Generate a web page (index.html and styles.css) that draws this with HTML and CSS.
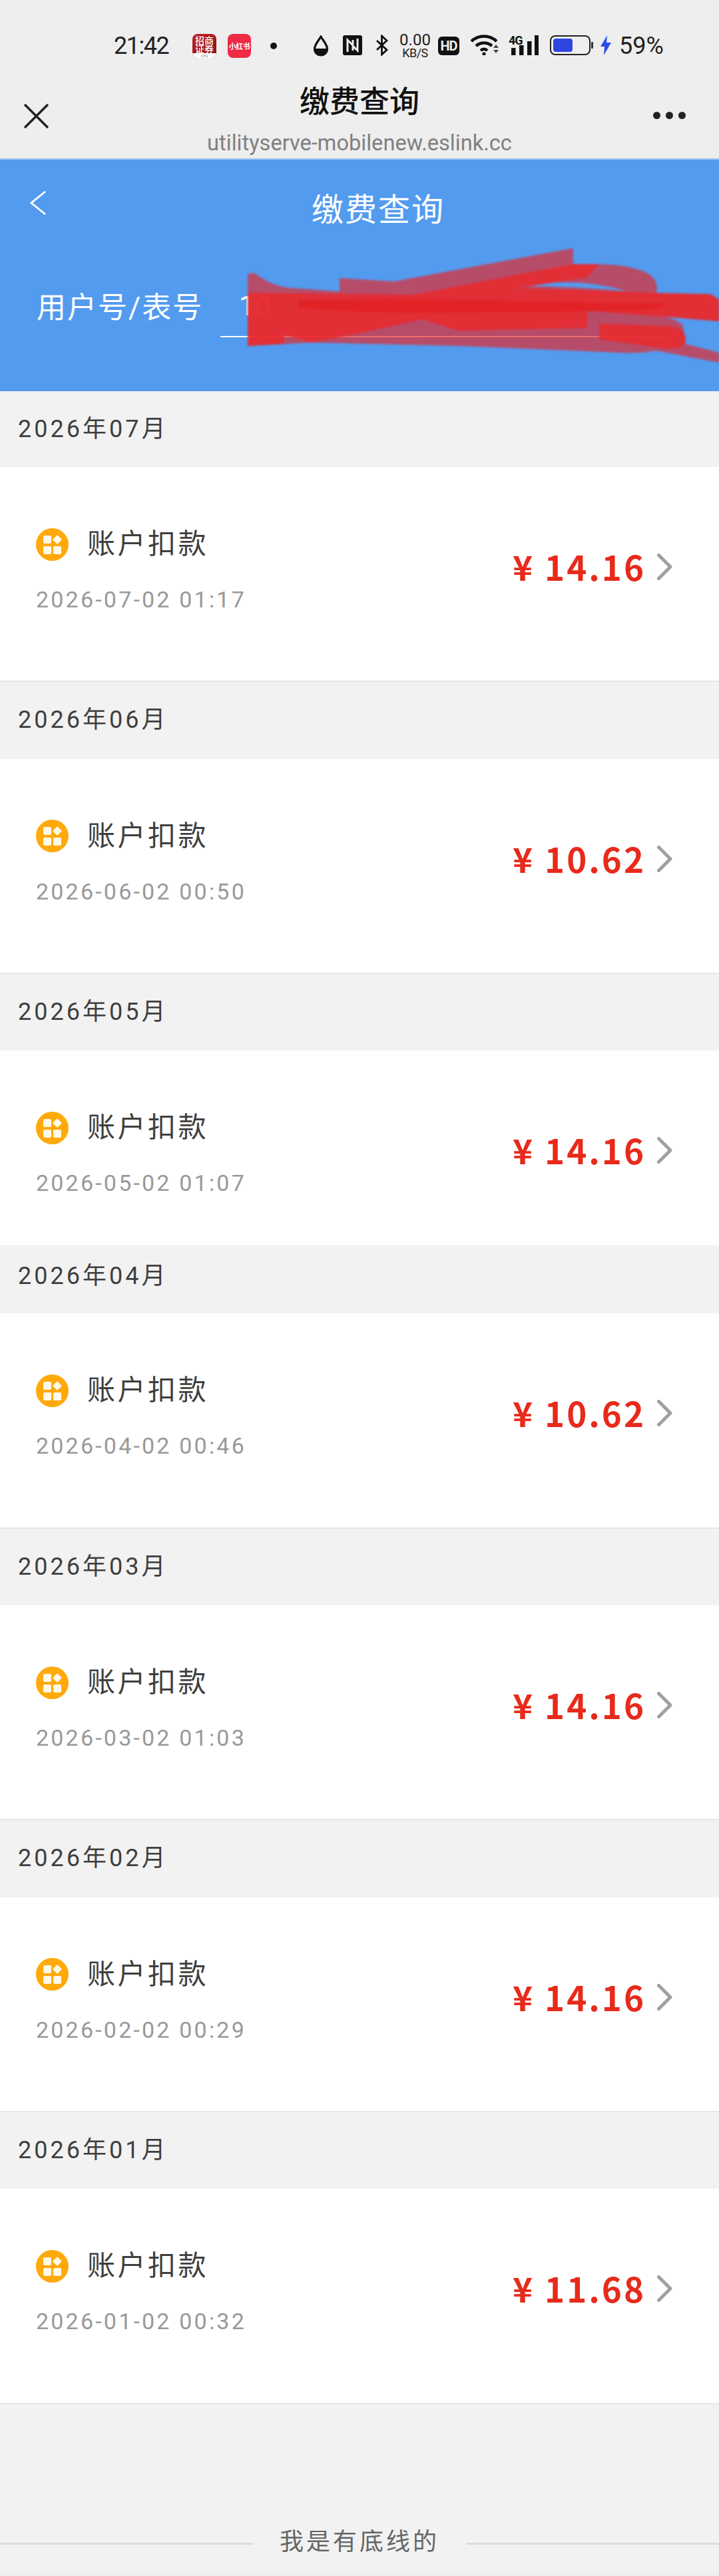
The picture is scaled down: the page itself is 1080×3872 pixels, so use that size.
FILE: index.html
```html
<!DOCTYPE html>
<html lang="zh-CN">
<head>
	<meta charset="UTF-8">
	<meta name="viewport" content="width=device-width,minimum-scale=1.0,maximum-scale=1.0,user-scalable=no">
	<title>缴费查询</title>
	<link rel="stylesheet" href="styles.css">
</head>
<body>
	<header class="top">
		<div class="status">
			<span class="time">21:42</span>
			<span class="app cms"><b>招商<br>证券</b><small>CMS</small></span>
			<span class="app xhs">小红书</span>
			<i class="dot"></i>
			<svg class="drop" viewBox="0 0 24 32"><path d="M12 2C8 9 2.500 14 2.500 20.500a9.500 9.500 0 0 0 19 0C21.500 14 16 9 12 2z" fill="none" stroke="#111" stroke-width="3.200"/><path d="M3 20h18v1a9 9 0 0 1-18 0z" fill="#111"/></svg>
			<svg class="nfc" viewBox="0 0 29 30"><rect width="29" height="30" rx="3" fill="#111"/><path d="M7 25V7l8 8v8M22 5v18l-7-7V7" fill="none" stroke="#eee" stroke-width="3"/></svg>
			<svg class="bt" viewBox="0 0 21 32"><path d="M3 9l15 14-7.500 7V2L18 9 3 23" fill="none" stroke="#111" stroke-width="2.800"/></svg>
			<span class="speed"><b>0.00</b><em>KB/S</em></span>
			<span class="hd">HD</span>
			<svg class="wifi" viewBox="0 0 45 32"><path d="M2 11c11-10 27-10 38 0M9 18c7-6 17-6 24 0M16 25c3-3 7-3 10 0" fill="none" stroke="#111" stroke-width="4.500"/><circle cx="21" cy="30" r="2.600" fill="#111"/><path d="M35 21l4-5 4 5zM35 24h8l-4 5z" fill="#444"/></svg>
			<svg class="signal" viewBox="0 0 45 32"><rect x="4" y="21" width="6.500" height="11" fill="#111"/><rect x="16" y="17" width="6.500" height="15" fill="#111"/><rect x="28" y="11" width="6.500" height="21" fill="#111"/><rect x="39" y="2" width="6" height="30" fill="#111"/><text x="0" y="16" class="sig-text">4G</text></svg>
			<svg class="batt" viewBox="0 0 66 30"><rect x="1" y="1" width="59" height="28" rx="7" fill="none" stroke="#222" stroke-width="2"/><rect x="5" y="5" width="29" height="20" rx="4" fill="#2f45e0"/><rect x="62" y="10" width="3" height="10" rx="1" fill="#333"/></svg>
			<svg class="bolt" viewBox="0 0 18 30"><path d="M11 0L1 17h6l-1 13L17 11h-7z" fill="#2f4be8"/></svg>
			<span class="pct">59%</span>
		</div>
		<div class="titlebar">
			<svg class="close" viewBox="0 0 37 37"><path d="M1 1l35 35M36 1L1 36" fill="none" stroke="#222" stroke-width="3.500"/></svg>
			<div class="titles">
				<h1>缴费查询</h1>
				<p>utilityserve-mobilenew.eslink.cc</p>
			</div>
			<div class="more"><i></i><i></i><i></i></div>
		</div>
	</header>

	<section class="query">
		<div class="query-head">
			<svg class="back" viewBox="0 0 24 36"><path d="M23 1L2 18l21 17" fill="none" stroke="#fff" stroke-width="2.800"/></svg>
			<h2>缴费查询</h2>
		</div>
		<div class="query-form">
			<label>用户号/表号</label>
			<div class="input">10</div>
		</div>
		<svg class="scribble" viewBox="0 238 1080 350">
			<path class="soft" fill-rule="evenodd" d="M382 410Q410 432 441 433L510 438V418L592 423L861 373V397H899Q950 398 975 412Q992 425 985 442H1067L1080 450V483L985 473Q1020 480 1026 490L1030 517L1080 530V545L985 527Q960 532 930 530L689 520L468 515L372 520V412ZM785 430Q870 416 943 438Q860 430 785 430Z"/>
			<path class="dense" d="M372 440L620 443L861 397H899L882 417L778 433L985 440L1067 442L1080 450V483L882 467V493L689 497L634 480L530 503L468 515L427 503V517L372 520Z"/>
			<path class="core" d="M448 452Q620 448 760 452T1000 456Q1000 468 900 468T640 470Q520 470 448 462Z"/>
			<path class="dense" d="M900 486L1005 490Q1032 494 1030 512Q1026 526 1000 524L900 510Z"/>
		</svg>
	</section>

	<main>
		<h3 class="month first">2026年07月</h3>
		<a class="bill">
			<div class="bill-main">
				<div class="bill-name"><svg class="grid" viewBox="0 0 49 49"><circle cx="24.500" cy="24.500" r="24.500" fill="#ffa90a"/><g fill="#fff9ea"><rect x="11" y="11" width="12" height="12" rx="2"/><rect x="27" y="12" width="10" height="10" rx="1.500" transform="rotate(45 32 17)"/><rect x="11" y="27" width="12" height="12" rx="2"/><rect x="26" y="27" width="12" height="12" rx="2"/></g></svg><span>账户扣款</span></div>
				<div class="bill-date">2026-07-02 01:17</div>
			</div>
			<div class="bill-amount"><span>¥</span>14.16<svg class="arrow" viewBox="0 0 23 40"><path d="M2.500 2.500L20 20 2.500 37.500" fill="none" stroke="#a0a0a0" stroke-width="5" stroke-linecap="round" stroke-linejoin="round"/></svg></div>
		</a>
		<h3 class="month">2026年06月</h3>
		<a class="bill">
			<div class="bill-main">
				<div class="bill-name"><svg class="grid" viewBox="0 0 49 49"><circle cx="24.500" cy="24.500" r="24.500" fill="#ffa90a"/><g fill="#fff9ea"><rect x="11" y="11" width="12" height="12" rx="2"/><rect x="27" y="12" width="10" height="10" rx="1.500" transform="rotate(45 32 17)"/><rect x="11" y="27" width="12" height="12" rx="2"/><rect x="26" y="27" width="12" height="12" rx="2"/></g></svg><span>账户扣款</span></div>
				<div class="bill-date">2026-06-02 00:50</div>
			</div>
			<div class="bill-amount"><span>¥</span>10.62<svg class="arrow" viewBox="0 0 23 40"><path d="M2.500 2.500L20 20 2.500 37.500" fill="none" stroke="#a0a0a0" stroke-width="5" stroke-linecap="round" stroke-linejoin="round"/></svg></div>
		</a>
		<h3 class="month">2026年05月</h3>
		<a class="bill short">
			<div class="bill-main">
				<div class="bill-name"><svg class="grid" viewBox="0 0 49 49"><circle cx="24.500" cy="24.500" r="24.500" fill="#ffa90a"/><g fill="#fff9ea"><rect x="11" y="11" width="12" height="12" rx="2"/><rect x="27" y="12" width="10" height="10" rx="1.500" transform="rotate(45 32 17)"/><rect x="11" y="27" width="12" height="12" rx="2"/><rect x="26" y="27" width="12" height="12" rx="2"/></g></svg><span>账户扣款</span></div>
				<div class="bill-date">2026-05-02 01:07</div>
			</div>
			<div class="bill-amount"><span>¥</span>14.16<svg class="arrow" viewBox="0 0 23 40"><path d="M2.500 2.500L20 20 2.500 37.500" fill="none" stroke="#a0a0a0" stroke-width="5" stroke-linecap="round" stroke-linejoin="round"/></svg></div>
		</a>
		<h3 class="month tight">2026年04月</h3>
		<a class="bill">
			<div class="bill-main">
				<div class="bill-name"><svg class="grid" viewBox="0 0 49 49"><circle cx="24.500" cy="24.500" r="24.500" fill="#ffa90a"/><g fill="#fff9ea"><rect x="11" y="11" width="12" height="12" rx="2"/><rect x="27" y="12" width="10" height="10" rx="1.500" transform="rotate(45 32 17)"/><rect x="11" y="27" width="12" height="12" rx="2"/><rect x="26" y="27" width="12" height="12" rx="2"/></g></svg><span>账户扣款</span></div>
				<div class="bill-date">2026-04-02 00:46</div>
			</div>
			<div class="bill-amount"><span>¥</span>10.62<svg class="arrow" viewBox="0 0 23 40"><path d="M2.500 2.500L20 20 2.500 37.500" fill="none" stroke="#a0a0a0" stroke-width="5" stroke-linecap="round" stroke-linejoin="round"/></svg></div>
		</a>
		<h3 class="month">2026年03月</h3>
		<a class="bill">
			<div class="bill-main">
				<div class="bill-name"><svg class="grid" viewBox="0 0 49 49"><circle cx="24.500" cy="24.500" r="24.500" fill="#ffa90a"/><g fill="#fff9ea"><rect x="11" y="11" width="12" height="12" rx="2"/><rect x="27" y="12" width="10" height="10" rx="1.500" transform="rotate(45 32 17)"/><rect x="11" y="27" width="12" height="12" rx="2"/><rect x="26" y="27" width="12" height="12" rx="2"/></g></svg><span>账户扣款</span></div>
				<div class="bill-date">2026-03-02 01:03</div>
			</div>
			<div class="bill-amount"><span>¥</span>14.16<svg class="arrow" viewBox="0 0 23 40"><path d="M2.500 2.500L20 20 2.500 37.500" fill="none" stroke="#a0a0a0" stroke-width="5" stroke-linecap="round" stroke-linejoin="round"/></svg></div>
		</a>
		<h3 class="month">2026年02月</h3>
		<a class="bill">
			<div class="bill-main">
				<div class="bill-name"><svg class="grid" viewBox="0 0 49 49"><circle cx="24.500" cy="24.500" r="24.500" fill="#ffa90a"/><g fill="#fff9ea"><rect x="11" y="11" width="12" height="12" rx="2"/><rect x="27" y="12" width="10" height="10" rx="1.500" transform="rotate(45 32 17)"/><rect x="11" y="27" width="12" height="12" rx="2"/><rect x="26" y="27" width="12" height="12" rx="2"/></g></svg><span>账户扣款</span></div>
				<div class="bill-date">2026-02-02 00:29</div>
			</div>
			<div class="bill-amount"><span>¥</span>14.16<svg class="arrow" viewBox="0 0 23 40"><path d="M2.500 2.500L20 20 2.500 37.500" fill="none" stroke="#a0a0a0" stroke-width="5" stroke-linecap="round" stroke-linejoin="round"/></svg></div>
		</a>
		<h3 class="month">2026年01月</h3>
		<a class="bill">
			<div class="bill-main">
				<div class="bill-name"><svg class="grid" viewBox="0 0 49 49"><circle cx="24.500" cy="24.500" r="24.500" fill="#ffa90a"/><g fill="#fff9ea"><rect x="11" y="11" width="12" height="12" rx="2"/><rect x="27" y="12" width="10" height="10" rx="1.500" transform="rotate(45 32 17)"/><rect x="11" y="27" width="12" height="12" rx="2"/><rect x="26" y="27" width="12" height="12" rx="2"/></g></svg><span>账户扣款</span></div>
				<div class="bill-date">2026-01-02 00:32</div>
			</div>
			<div class="bill-amount"><span>¥</span>11.68<svg class="arrow" viewBox="0 0 23 40"><path d="M2.500 2.500L20 20 2.500 37.500" fill="none" stroke="#a0a0a0" stroke-width="5" stroke-linecap="round" stroke-linejoin="round"/></svg></div>
		</a>
	</main>

	<footer class="end"><span>我是有底线的</span></footer>
</body>
</html>
```

FILE: styles.css
```css
*{margin: 0; padding: 0; box-sizing: border-box;}
html,body{width: 1080px; height: 3872px; overflow: hidden;}
body{background: #f2f2f2; font-family: Roboto, "Noto Sans CJK SC", sans-serif; color: #3f3f3f;}
i,em{font-style: normal;}
svg{display: block; flex: none;}

/* status bar + webview title */
.top{height: 238px; background: #eee;}
.status{height: 120px; padding: 51px 0 0 171px; display: flex; align-items: flex-start;}
.time{width: 82px; font-size: 36px; line-height: 36px; letter-spacing: -1.5px; color: #222;}
.app{width: 36px; height: 36px; border-radius: 8px; overflow: hidden; color: #fff; text-align: center; font-family: "Noto Sans CJK SC", sans-serif; flex: none;}
.cms{margin-left: 36px; background: linear-gradient(135deg, #c0201f, #8e1015); font-size: 14px; line-height: 13px; padding-top: 3px; position: relative;}
.cms b{display: block; font-weight: 500;}
.cms small{position: absolute; left: 0; right: 0; bottom: 0; height: 7px; background: #fff; color: #777; font-size: 5px; line-height: 7px;}
.xhs{margin-left: 17px; width: 35px; background: #ee2a45; font-size: 11px; line-height: 36px; font-weight: 700; white-space: nowrap; letter-spacing: -.5px;}
.dot{width: 10px; height: 10px; margin: 13px 0 0 29px; background: #111; border-radius: 50%;}
.drop{width: 24px; height: 32px; margin: 2px 0 0 54px;}
.nfc{width: 29px; height: 30px; margin: 2px 0 0 21px;}
.bt{width: 21px; height: 32px; margin: 1px 0 0 19px;}
.speed{width: 51px; margin-left: 14px; text-align: center; color: #222; white-space: nowrap;}
.speed b{display: block; font-weight: 400; font-size: 24px; line-height: 19px;}
.speed em{display: block; margin-top: 2px; font-size: 18px; line-height: 16px; letter-spacing: -.5px;}
.hd{width: 32px; height: 28px; margin: 4px 0 0 9px; background: #111; border-radius: 6px; color: #eee; font-size: 20px; line-height: 28px; font-weight: 700; text-align: center; letter-spacing: -1px;}
.wifi{width: 45px; height: 32px; margin-left: 16px;}
.signal{width: 45px; height: 32px; margin-left: 13px;}
.sig-text{font-family: Roboto, sans-serif; font-size: 18px; font-weight: 700; fill: #111; letter-spacing: -1px;}
.batt{width: 66px; height: 30px; margin: 2px 0 0 17px;}
.bolt{width: 18px; height: 30px; margin: 2px 0 0 9px;}
.pct{margin-left: 11px; font-size: 36px; line-height: 36px; color: #222;}

.titlebar{height: 118px; padding: 0 50px 0 36px; display: flex; justify-content: space-between; align-items: flex-start;}
.close{width: 37px; height: 37px; margin-top: 36px;}
.titles{text-align: center; width: 600px; margin: 8px 0 0 26px;}
.titles h1{font-size: 45px; line-height: 52px; font-weight: 500; color: #111;}
.titles p{font-size: 32.6px; line-height: 40px; margin-top: 15px; color: #808080; white-space: nowrap;}
.more{display: flex; gap: 8px; margin-top: 48px;}
.more i{width: 11px; height: 11px; background: #222; border-radius: 50%;}

/* blue query panel */
.query{height: 350px; background: #539bef; border-top: 2px solid #9cc6f4; position: relative; overflow: hidden; color: #fff;}
.query-head{height: 195px; padding: 47px 0 0 45px; display: flex; align-items: flex-start;}
.back{width: 24px; height: 36px;}
.query-head h2{width: 199px; margin: 1px 0 0 399px; font-size: 48px; line-height: 56px; font-weight: 400; letter-spacing: 2px; white-space: nowrap;}
.query-form{padding-left: 55px; display: flex; align-items: flex-start;}
.query-form label{width: 276px; font-size: 44px; line-height: 56px; letter-spacing: 2px; white-space: nowrap;}
.input{width: 668px; height: 72px; padding-left: 28px; border-bottom: 2px solid #fff; font-size: 42px; line-height: 50px;}
.scribble{position: absolute; left: 0; top: -2px; width: 1080px; height: 350px; filter: blur(1.5px);}
.soft{fill: #e8262a; opacity: .68;}
.dense{fill: #ea2a2c; opacity: .86;}
.core{fill: #e2181a; opacity: .5;}

/* monthly list */
.month{height: 115.4px; padding-left: 27px; font-size: 36px; line-height: 115.4px; font-weight: 400; letter-spacing: 4px; background: #f2f2f2;}
.month.first{height: 114px; line-height: 114px;}
.month.tight{height: 102px; line-height: 92px;}
.bill{height: 323.3px; padding: 91px 70px 0 54px; background: #fff; border-bottom: 2px solid #e6e6e6; display: flex; justify-content: space-between; align-items: flex-start;}
.bill.short{height: 293px; border-bottom: 0;}
.bill-name{display: flex; align-items: center; height: 50px; font-size: 42px; line-height: 50px; letter-spacing: 3.5px;}
.grid{width: 49px; height: 49px; margin-right: 28px;}
.bill-date{margin-top: 38px; font-size: 34px; line-height: 40px; letter-spacing: 3.2px; color: #999;}
.bill-amount{display: flex; align-items: center; height: 60px; margin-top: 28px; font-family: "Noto Sans CJK SC", sans-serif; font-size: 51px; line-height: 60px; font-weight: 700; letter-spacing: 3px; color: #e72a1b;}
.bill-amount span{margin-right: 15px;}
.arrow{width: 23px; height: 40px; margin: 2px 0 0 17px;}

.end{position: absolute; top: 3800px; left: 0; width: 1080px; height: 72px; display: flex; align-items: flex-start; justify-content: center;}
.end span{padding: 0 40px; font-size: 36px; line-height: 42px; letter-spacing: 4px; color: #666; background: #f2f2f2; position: relative; z-index: 1;}
.end::before{content: ""; position: absolute; left: 0; right: 0; top: 22px; height: 3px; background: #dcdcdc;}
.end::after{content: ""; position: absolute; left: 0; right: 0; bottom: 0; height: 5px; background: #eee;}
```
